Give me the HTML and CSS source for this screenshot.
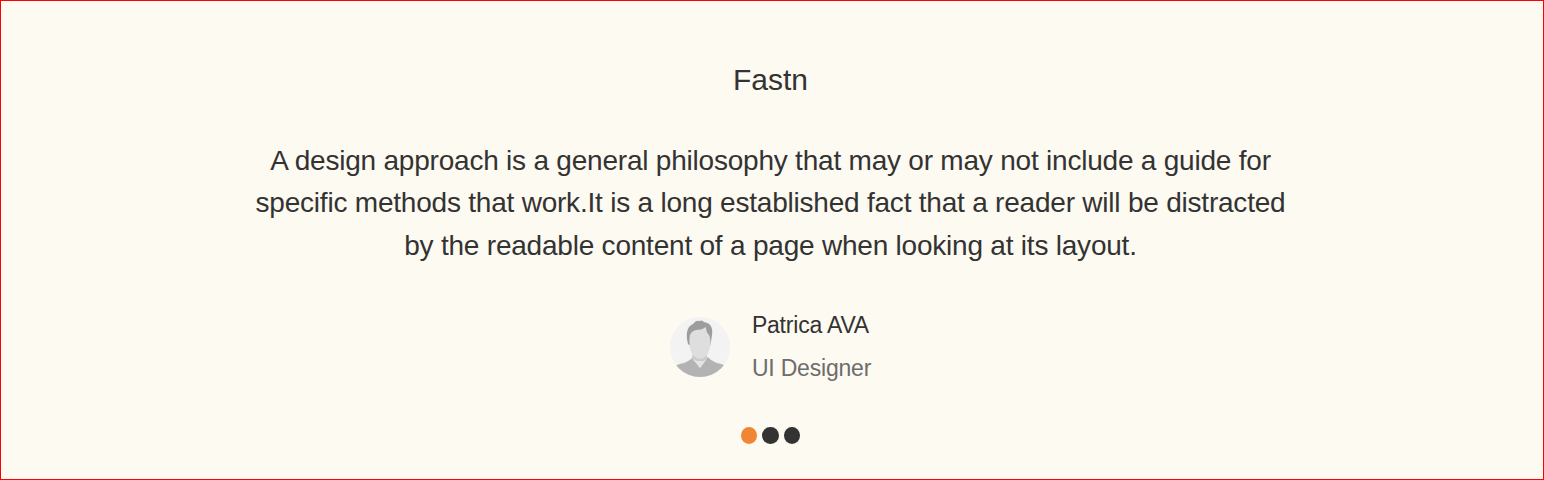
FILE: index.html
```html
<!DOCTYPE html>
<html lang="en">
<head>
<meta charset="utf-8">
<title>Fastn</title>
<link rel="stylesheet" href="styles.css">
</head>
<body>
<section class="testimonial">
  <h2 class="brand">Fastn</h2>
  <p class="quote">A design approach is a general philosophy that may or may not include a guide for<br>specific methods that work.It is a long established fact that a reader will be distracted<br>by the readable content of a page when looking at its layout.</p>
  <div class="author">
    <svg class="avatar" viewBox="0 0 60 60" aria-hidden="true">
      <defs><clipPath id="round"><circle cx="30" cy="30" r="30"/></clipPath></defs>
      <g clip-path="url(#round)">
        <rect width="60" height="60" fill="#f3f3f3"/>
        <path d="M2 60V51Q7 47 14 46Q21 43 23 40L30 49L38 40Q40 43 47 46Q54 47 58 51V60Z" fill="#b3b3b3"/>
        <path d="M23 33H37V41L30 51L22 42Z" fill="#cbcbcb"/>
        <path d="M23 42L30 51L37 42L34 44H27Z" fill="#e4e4e4"/>
        <path d="M18 27C15 15 18 9 23 7Q26 3 29 4L32 3.5L34 5C42 6 43 13 42 18L40.500 28H19Z" fill="#9d9d9d"/>
        <path d="M19.500 21Q20 14 26 13Q32 13 36 10Q36 15 39 18Q40.500 21 40.500 28Q39 37 35 40Q30 44 25 40Q20.500 36 19.500 28Z" fill="#dedede"/>
      </g>
    </svg>
    <div class="details">
      <div class="name">Patrica AVA</div>
      <div class="role">UI Designer</div>
    </div>
  </div>
  <div class="dots"><span class="dot active"></span><span class="dot"></span><span class="dot"></span></div>
</section>
</body>
</html>
```
FILE: styles.css
```css
* { box-sizing: border-box; }
body { margin: 0; font-family: "Liberation Sans", Arial, sans-serif; }
.testimonial {
  height: 480px;
  padding: 57px 3px 0 0;
  display: flex;
  flex-direction: column;
  align-items: center;
  background: #fdfaf1;
  border: 1px solid #f00;
  color: #333;
}
.brand { margin: 0; font-size: 30px; line-height: 44px; font-weight: 400; }
.quote { margin: 38px 0 0; font-size: 28px; line-height: 42.4px; letter-spacing: -.215px; text-align: center; white-space: nowrap; }
.author { display: flex; gap: 22px; margin-top: 36.3px; height: 86px; }
.avatar { width: 60px; height: 60px; margin-top: 13px; }
.details { font-size: 23px; line-height: 43px; letter-spacing: -.2px; white-space: nowrap; }
.role { color: #6e6c6c; }
.dots { display: flex; gap: 5px; margin-top: 37px; }
.dot { width: 16.5px; height: 17px; border-radius: 50%; background: #333; }
.active { background: #f08635; }
```
